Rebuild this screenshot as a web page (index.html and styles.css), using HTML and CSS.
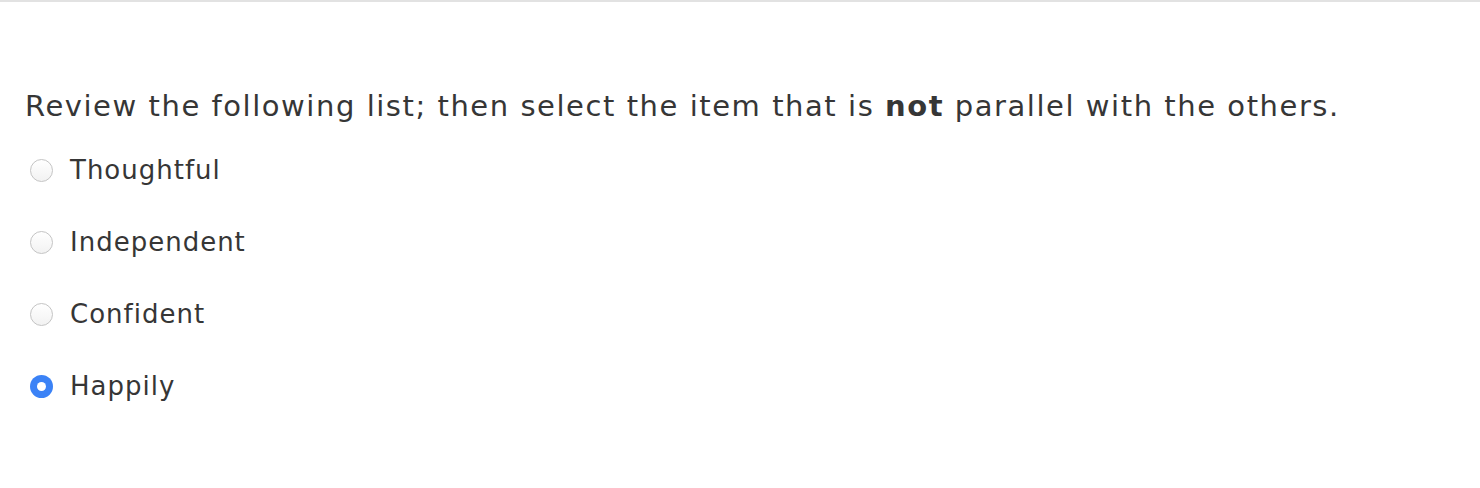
FILE: index.html
```html
<!DOCTYPE html>
<html>
<head>
<meta charset="utf-8">
<link rel="stylesheet" href="styles.css">
</head>
<body>
<div class="page">
  <p class="question">Review the following list; then select the item that is <b>not</b> parallel with the others.</p>
  <ul class="options">
    <li class="option"><span class="radio"></span><span class="label">Thoughtful</span></li>
    <li class="option"><span class="radio"></span><span class="label">Independent</span></li>
    <li class="option"><span class="radio"></span><span class="label">Confident</span></li>
    <li class="option"><span class="radio checked"></span><span class="label">Happily</span></li>
  </ul>
</div>
</body>
</html>
```
FILE: styles.css
```css
html, body {
  margin: 0;
  padding: 0;
  background: #ffffff;
}
body {
  font-family: "DejaVu Sans", Verdana, sans-serif;
  color: #363636;
}
.page {
  border-top: 2px solid #e2e2e2;
  padding: 0 0 0 25px;
}
.question {
  margin: 0;
  padding-top: 86px;
  font-size: 29px;
  line-height: 36px;
  letter-spacing: 1.55px;
}
.question b {
  font-weight: bold;
  letter-spacing: 1.5px;
}
.options {
  list-style: none;
  margin: 30px 0 0 0;
  padding: 0;
  display: flex;
  flex-direction: column;
  gap: 40px;
}
.option {
  display: flex;
  align-items: center;
  height: 32px;
  font-size: 26px;
  letter-spacing: 1px;
}
.radio {
  box-sizing: border-box;
  width: 23px;
  height: 23px;
  border-radius: 50%;
  border: 1px solid #c4c4c4;
  background: linear-gradient(#ffffff, #f2f2f2);
  margin: 0 17px 0 5px;
  flex: none;
}
.radio.checked {
  border: none;
  background: #3b82f6;
  display: flex;
  align-items: center;
  justify-content: center;
}
.radio.checked::after {
  content: "";
  width: 9px;
  height: 9px;
  border-radius: 50%;
  background: #ffffff;
}
```
